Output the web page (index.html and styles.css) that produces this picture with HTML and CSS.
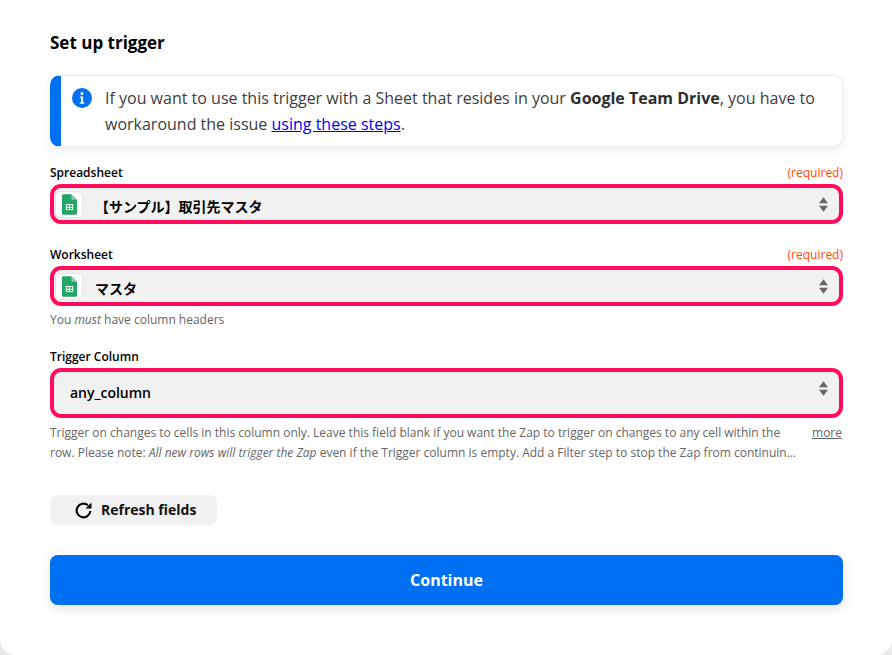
FILE: index.html
```html
<!DOCTYPE html>
<html lang="en">
<head>
<meta charset="utf-8">
<title>Set up trigger</title>
<link rel="stylesheet" href="styles.css">
</head>
<body>
<main class="panel">
  <h1 class="title">Set up trigger</h1>
  <div class="alert">
    <svg class="alert-icon" viewBox="0 0 20 20"><circle cx="10" cy="10" r="10" fill="#0070f3"/><circle cx="10" cy="5.6" r="1.5" fill="#fff"/><path d="M7.9 8.400h3.200v6h1.200v1.400H7.800v-1.400h1.200V9.800H7.900z" fill="#fff"/></svg>
    <p class="alert-text">If you want to use this trigger with a Sheet that resides in your <b>Google Team Drive</b>, you have to workaround the issue <a href="#">using these steps</a>.</p>
  </div>

  <section class="field field-first">
    <div class="label-row"><label class="label">Spreadsheet</label><span class="required">(required)</span></div>
    <div class="select">
      <span class="app-icon"><svg viewBox="0 0 16 22" width="15" height="21"><path d="M1.500 0H10l6 6v14.500a1.500 1.500 0 0 1-1.500 1.500h-13A1.500 1.500 0 0 1 0 20.500V1.500A1.500 1.500 0 0 1 1.500 0z" fill="#23a566"/><path d="M10 0l6 6h-4.500A1.500 1.500 0 0 1 10 4.500z" fill="#8ed1b1"/><path d="M4 10.500h8v6.500H4z" fill="#fff"/><path d="M5 11.500h2.500v2H5zM8.500 11.500H11v2H8.500zM5 14.500h2.500v1.500H5zM8.500 14.500H11v1.500H8.500z" fill="#23a566"/></svg></span>
      <span class="value value-jp">【サンプル】取引先マスタ</span>
      <svg class="arrows" viewBox="0 0 10 16"><path d="M5 0l5 6.500H0zM5 16l5-6.500H0z" fill="#666"/></svg>
    </div>
  </section>

  <section class="field">
    <div class="label-row"><label class="label">Worksheet</label><span class="required">(required)</span></div>
    <div class="select">
      <span class="app-icon"><svg viewBox="0 0 16 22" width="15" height="21"><path d="M1.500 0H10l6 6v14.500a1.500 1.500 0 0 1-1.500 1.500h-13A1.500 1.500 0 0 1 0 20.500V1.500A1.500 1.500 0 0 1 1.500 0z" fill="#23a566"/><path d="M10 0l6 6h-4.500A1.500 1.500 0 0 1 10 4.500z" fill="#8ed1b1"/><path d="M4 10.500h8v6.500H4z" fill="#fff"/><path d="M5 11.500h2.500v2H5zM8.500 11.500H11v2H8.500zM5 14.500h2.500v1.500H5zM8.500 14.500H11v1.500H8.500z" fill="#23a566"/></svg></span>
      <span class="value value-jp">マスタ</span>
      <svg class="arrows" viewBox="0 0 10 16"><path d="M5 0l5 6.500H0zM5 16l5-6.500H0z" fill="#666"/></svg>
    </div>
    <p class="help">You <i>must</i> have column headers</p>
  </section>

  <section class="field field-trigger">
    <div class="label-row"><label class="label">Trigger Column</label></div>
    <div class="select select-tall">
      <span class="value value-plain">any_column</span>
      <svg class="arrows" viewBox="0 0 10 16"><path d="M5 0l5 6.500H0zM5 16l5-6.500H0z" fill="#666"/></svg>
    </div>
    <div class="help-row">
      <p class="help help-long">Trigger on changes to cells in this column only. Leave this field blank if you want the Zap to trigger on changes to any cell within the row. Please note: <i>All new rows will trigger the Zap</i> even if the Trigger column is empty. Add a Filter step to stop the Zap from continuin…</p>
      <a class="more" href="#">more</a>
    </div>
  </section>

  <button class="refresh" type="button">
    <svg viewBox="0 0 18 18" width="19" height="19"><path d="M15.500 9.500A6.500 6.500 0 1 1 13.200 4" fill="none" stroke="#000" stroke-width="2"/><path d="M16.500 1.500v5.500H11z" fill="#000"/></svg>
    <span class="refresh-label">Refresh fields</span>
  </button>
  <button class="continue" type="button">Continue</button>
</main>
</body>
</html>
```
FILE: styles.css
```css
* { box-sizing: border-box; }
html, body { margin: 0; height: 100%; }
body {
  background: #e9e9e9;
  font-family: "Open Sans", "Noto Sans CJK JP", sans-serif;
  color: #2d2e2e;
  overflow: hidden;
}
.panel {
  height: 655px;
  background: #fff;
  border-radius: 0 0 16px 16px;
  padding: 31px 49px 0 50px;
}
.title {
  margin: 0;
  font-size: 17px;
  line-height: 24px;
  font-weight: 700;
  color: #000;
}
.alert {
  margin-top: 20px;
  height: 72px;
  display: flex;
  align-items: flex-start;
  background: #fff;
  border: 1px solid #ececec;
  border-left: 11px solid #0070f3;
  border-radius: 10px;
  box-shadow: 0 3px 10px rgba(0, 0, 0, .08);
  padding: 9px 14px 0 11px;
}
.alert-icon { width: 20px; height: 20px; flex: none; margin-top: 3px; }
.alert-text {
  margin: 0 0 0 13px;
  font-size: 16px;
  line-height: 26px;
  color: #3d3d3d;
}
.alert-text b { color: #2d2e2e; }
.alert-text a { color: #0000ee; }
.field { margin-top: 22px; }
.field-first { margin-top: 17px; }
.field-trigger { margin-top: 20px; }
.label-row {
  display: flex;
  justify-content: space-between;
  height: 20px;
  line-height: 18px;
}
.label { font-size: 12px; font-weight: 600; color: #000; }
.required { font-size: 12px; color: #ff4a00; }
.select {
  height: 40px;
  display: flex;
  align-items: center;
  background: #f1f1f1;
  border: 4px solid #ff0d5c;
  border-radius: 11px;
}
.select-tall { height: 50px; }
.app-icon {
  width: 28px;
  height: 27px;
  margin-left: 1px;
  display: flex;
  align-items: center;
  justify-content: center;
  flex: none;
  background: #fff;
  border: 1px solid #e4e4e4;
  border-radius: 5px;
}
.value {
  flex: 1;
  margin-left: 12px;
  font-size: 14px;
  font-weight: 600;
  color: #000;
}
.value-jp { margin-top: 4px; }
.value-plain { margin-left: 16px; margin-bottom: 2px; }
.arrows { width: 9px; height: 15px; margin-right: 11px; flex: none; }
.select-tall .arrows { margin-bottom: 10px; }
.help {
  margin: 6px 0 0;
  font-size: 12px;
  line-height: 16px;
  color: #666;
}
.help-row { display: flex; align-items: flex-start; justify-content: space-between; gap: 15px; }
.help-long { flex: 1; margin-top: 5px; line-height: 20px; }
.more {
  margin-top: 5px;
  margin-right: 1px;
  font-size: 12px;
  line-height: 20px;
  color: #666;
  white-space: nowrap;
}
.refresh {
  display: flex;
  align-items: center;
  gap: 8px;
  width: 167px;
  height: 30px;
  margin-top: 32px;
  padding: 0 0 0 24px;
  border: 0;
  border-radius: 7px;
  background: #f1f1f1;
  font: 700 14px "Open Sans", sans-serif;
  color: #111;
}
.refresh-label { margin-bottom: 2px; }
.continue {
  display: block;
  width: 793px;
  height: 50px;
  margin-top: 30px;
  border: 0;
  border-radius: 8px;
  background: #0070f3;
  box-shadow: 0 4px 12px rgba(0, 0, 0, .1);
  font: 700 16px "Open Sans", sans-serif;
  color: #fff;
}
```
